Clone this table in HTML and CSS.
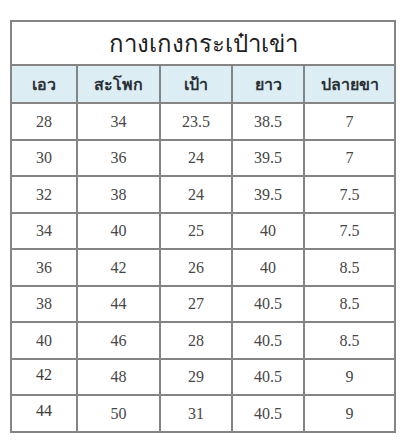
FILE: index.html
```html
<!DOCTYPE html>
<html lang="th">
<head>
<meta charset="utf-8">
<title>กางเกงกระเป๋าเข่า</title>
<link rel="stylesheet" href="styles.css">
</head>
<body>
<table class="size-table">
  <colgroup>
    <col class="c1"><col class="c2"><col class="c3"><col class="c4"><col class="c5">
  </colgroup>
  <thead>
    <tr class="title-row"><th colspan="5">กางเกงกระเป๋าเข่า</th></tr>
    <tr class="head-row"><th>เอว</th><th>สะโพก</th><th>เป้า</th><th>ยาว</th><th>ปลายขา</th></tr>
  </thead>
  <tbody>
    <tr class="r37"><td>28</td><td>34</td><td>23.5</td><td>38.5</td><td>7</td></tr>
    <tr><td>30</td><td>36</td><td>24</td><td>39.5</td><td>7</td></tr>
    <tr class="r37"><td>32</td><td>38</td><td>24</td><td>39.5</td><td>7.5</td></tr>
    <tr><td>34</td><td>40</td><td>25</td><td>40</td><td>7.5</td></tr>
    <tr class="r37"><td>36</td><td>42</td><td>26</td><td>40</td><td>8.5</td></tr>
    <tr><td>38</td><td>44</td><td>27</td><td>40.5</td><td>8.5</td></tr>
    <tr class="r37"><td>40</td><td>46</td><td>28</td><td>40.5</td><td>8.5</td></tr>
    <tr><td class="raised">42</td><td>48</td><td>29</td><td>40.5</td><td>9</td></tr>
    <tr class="r37"><td class="raised">44</td><td>50</td><td>31</td><td>40.5</td><td>9</td></tr>
  </tbody>
</table>
</body>
</html>
```

FILE: styles.css
```css
html, body {
  margin: 0;
  padding: 0;
  background: #ffffff;
}

body {
  padding: 20px 0 0 10px;
}

.size-table {
  border-collapse: collapse;
  table-layout: fixed;
  width: 384px;
}

.c1 { width: 66px; }
.c2 { width: 83px; }
.c3 { width: 72px; }
.c4 { width: 72px; }
.c5 { width: 91px; }

.size-table th,
.size-table td {
  border: 2px solid #858585;
  text-align: center;
  padding: 0;
}

.title-row th {
  height: 42px;
  font-family: "Tahoma", "DejaVu Sans", "Noto Sans", sans-serif;
  font-weight: normal;
  font-size: 24px;
  color: #1e1e1e;
  background: #ffffff;
}

.head-row th {
  height: 36px;
  background: #dcedf3;
  font-family: "Noto Sans", "DejaVu Sans Condensed", sans-serif;
  font-weight: bold;
  font-size: 16px;
  color: #2b3036;
}

.size-table td {
  height: 34px;
  font-family: "Liberation Serif", "Times New Roman", serif;
  font-size: 16px;
  color: #474747;
}

.size-table tr.r37 td {
  height: 35px;
}

.size-table td.raised {
  vertical-align: top;
  padding-top: 6px;
  height: 28px;
  color: #3a3a3a;
}

.size-table tr.r37 td.raised {
  height: 29px;
}
```
